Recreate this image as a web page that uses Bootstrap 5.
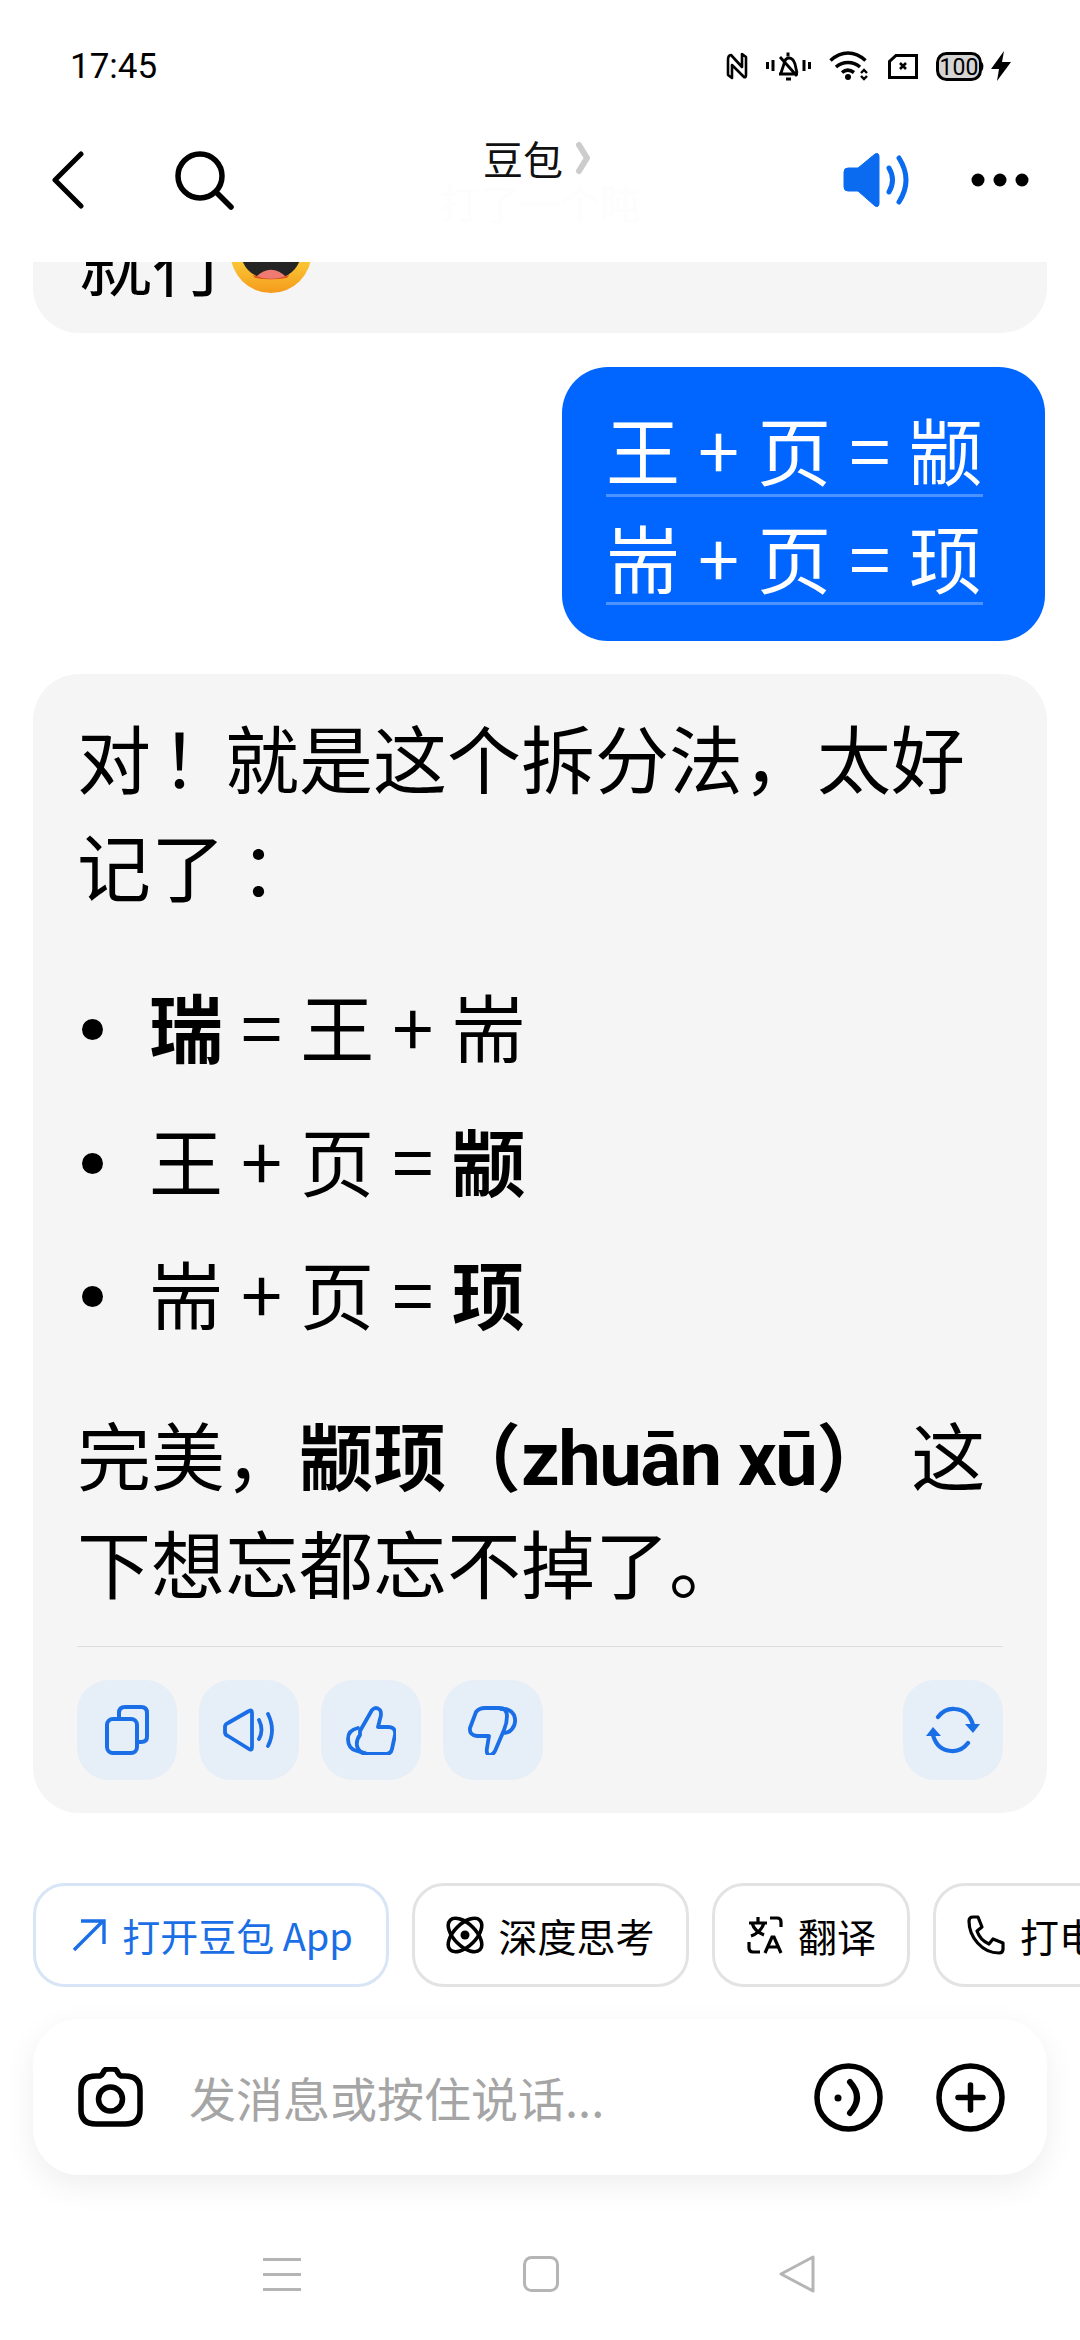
<!DOCTYPE html>
<html lang="zh">
<head>
<meta charset="UTF-8" />
<title>豆包</title>
<link href="https://cdn.jsdelivr.net/npm/bootstrap@5.3.0/dist/css/bootstrap.min.css" rel="stylesheet" />
<style>
body { width: 1080px; height: 2340px; overflow: hidden; background: #fff; color: #000; font-family: "Noto Sans CJK SC", "Noto Sans", sans-serif; }
svg { display: block; flex: none; }
.status-bar { height: 130px; padding: 2px 69px 0 70px; }
.clock { font: 400 35px/1 Roboto, sans-serif; }
.status-icons { gap: 18px; }
.batt-group { gap: 5px; }
.top-bar { height: 132px; padding: 0 51px 32px 51px; position: relative; }
.top-left { gap: 89px; }
.top-right { gap: 61px; }
.top-title { position: absolute; left: 483px; top: 6px; font-size: 40px; line-height: 44px; color: #111; }
.title-arrow { margin-left: 12px; }
.top-ghost { position: absolute; left: 440px; top: 50px; font-size: 40px; line-height: 44px; color: #fdfdfd; }
.bubble { font-size: 74px; line-height: 108px; word-spacing: 1.5px; }
.bubble-left { margin: 0 33px; background: #f5f5f5; border-radius: 46px; }
.bubble-cut { height: 71px; overflow: hidden; border-radius: 0 0 46px 46px; padding: 0 45px 22px; }
.bubble-cut span { line-height: 107px; }
.emoji-face { margin: 0 0 18px 4px; }
.bubble-user { width: 483px; height: 274px; margin: 34px 35px 33px auto; background: #0066ff; color: #fff; border-radius: 46px; padding: 22px 0 0 44px; line-height: 117px; }
.bubble-user div { width: 377px; height: 108px; white-space: nowrap; border-bottom: 3px solid #4d93ff; }
.bubble-main { height: 1139px; padding: 28px 45px 0 44px; }
.bubble-main p { margin: 0; }
.bang-mark { padding-left: 10px; margin-right: -10px; }
.colon-mark { padding-left: 15px; margin-right: -15px; }
.pinyin { font-family: Roboto, sans-serif; font-size: 76px; line-height: 1; letter-spacing: -1.5px; word-spacing: 0; }
.gap-after { margin-right: 3px; }
.dot-list { list-style: none; padding: 0; margin: 40px 0; }
.dot-list li { height: 133.5px; line-height: 133.5px; padding-left: 72px; position: relative; }
.dot-list li::before { content: ""; position: absolute; left: 5px; top: 61px; width: 21px; height: 21px; border-radius: 50%; background: #000; }
.bubble-main b { font-weight: 700; }
.msg-rule { height: 1px; background: #dedede; margin: 31px 0 33px 0; width: 926px; }
.act-row { margin-right: -1px; }
.act-group { gap: 22px; }
.act-btn { width: 100px; height: 100px; border-radius: 32px; background: #e6eef8; border: 0; padding: 0; }
.chips { margin: 70px 0 0 33px; gap: 23px; overflow: hidden; }
.chip { height: 104px; padding: 0; border: 3px solid #e3e3e3; border-radius: 32px; font-size: 39px; line-height: 1; background: #fff; white-space: nowrap; flex: none; gap: 14px; }
.chip-app { width: 356px; border-color: #d7e5f6; color: #1a6ee6; font-size: 38px; justify-content: center; gap: 16px; padding-left: 3px; }
.chip-think { width: 277px; justify-content: center; }
.chip-trans { width: 198px; justify-content: center; }
.chip-call { width: 200px; padding-left: 30px; }
.composer { height: 156px; margin: 32px 33px 0; border-radius: 46px; background: #fff; box-shadow: 0 10px 32px rgba(0,0,0,.07); padding: 0 42px 0 45px; }
.composer-hint { font-size: 47px; color: #a5a5a5; margin-left: 46px; }
.composer-tools { gap: 53px; }
.sys-nav { margin-top: 80px; padding-left: 263px; gap: 222px; }
.sys-back { margin-left: -2px; }
</style>
</head>
<body>

<div class="status-bar d-flex justify-content-between align-items-center">
  <div class="clock">17:45</div>
  <div class="status-icons d-flex align-items-center">
    <svg width="22" height="28" viewBox="0 0 22 28" fill="none" stroke="#000" stroke-width="2.600" stroke-linejoin="round"><path d="M2 8v15l4 3V13l12 12q2 1 2-2V5l-4-3v13L5 3Q2 3 2 8z"/></svg>
    <svg width="45" height="30" viewBox="0 0 45 30" fill="none" stroke="#000" stroke-width="2.800"><path d="M1.500 11v7M7 9v11M38 9v11M43.500 11v7" stroke-width="3"/><path d="M13 23h19M15 22l3-9q1-6 5-6t6 6l2 9M14 6l17 19"/><path d="M22 1.500v4M20 28h5" stroke-width="3"/></svg>
    <svg width="41" height="30" viewBox="0 0 41 30" fill="none" stroke="#000" stroke-width="3.600"><path d="M1.500 9.500c11-10 24-10 35 0M7 16c7-6 17-6 24 0M13 21.500c3.500-3 8-3 12 0"/><circle cx="19" cy="26" r="3" fill="#000" stroke="none"/><path d="M32 22l3-3 3 3M32 25l3 3 3-3" stroke-width="2.400"/></svg>
    <svg width="30" height="25" viewBox="0 0 30 25" fill="none" stroke="#000" stroke-width="3"><path d="M8 1.500h20.500v22h-27v-16z"/><path d="M12 9l6 6M18 9l-6 6" stroke-width="2.600"/></svg>
    <div class="batt-group d-flex align-items-center">
      <svg width="50" height="29" viewBox="0 0 50 29"><rect x="1.500" y="1.500" width="43" height="26" rx="9" fill="#d4d4d4" stroke="#000" stroke-width="3"/><path d="M46 10q3 4 0 9z" fill="#000"/><text x="23" y="23" text-anchor="middle" font-family="Roboto, sans-serif" font-size="23" fill="#000">100</text></svg>
      <svg width="20" height="30" viewBox="0 0 20 30"><path d="M13 0L0 18h8l-2 12L20 11h-9z" fill="#000"/></svg>
    </div>
  </div>
</div>

<div class="top-bar d-flex align-items-center justify-content-between">
  <div class="top-left d-flex align-items-center">
    <svg width="34" height="58" viewBox="0 0 34 58" fill="none" stroke="#000" stroke-width="5" stroke-linecap="round" stroke-linejoin="round"><path d="M30 3L4 29l26 26"/></svg>
    <svg width="60" height="60" viewBox="0 0 60 60" fill="none" stroke="#000" stroke-width="5.500" stroke-linecap="round"><circle cx="26" cy="26" r="22"/><path d="M42 42l15 15"/></svg>
  </div>
  <div class="top-title d-flex align-items-center">豆包<svg class="title-arrow" width="16" height="34" viewBox="0 0 16 34" fill="none" stroke="#ccc" stroke-width="6" stroke-linecap="round" stroke-linejoin="round"><path d="M4 4l8 13-8 13"/></svg></div>
  <div class="top-ghost">打了一个盹</div>
  <div class="top-right d-flex align-items-center">
    <svg width="67" height="56" viewBox="0 0 67 56" fill="none"><path d="M36 5q0-5-4-3L15 16H5q-4 0-4 4v15q0 4 4 4h10l17 15q4 2 4-3z" fill="#0a6bf0" stroke="#0a6bf0" stroke-width="1"/><path d="M46 16q7 12 0 24M56 6q14 22 0 44" stroke="#0a6bf0" stroke-width="5" stroke-linecap="round"/></svg>
    <svg width="58" height="14" viewBox="0 0 58 14" fill="#000"><circle cx="7" cy="7" r="6.500"/><circle cx="29" cy="7" r="6.500"/><circle cx="51" cy="7" r="6.500"/></svg>
  </div>
</div>

<div class="bubble bubble-left bubble-cut d-flex align-items-end">
  <span>就行</span>
  <svg class="emoji-face" width="82" height="81" viewBox="0 0 80 80"><defs><linearGradient id="emojiFill" x1="0" y1="0" x2="0" y2="1"><stop offset="0.5" stop-color="#fcd43e"/><stop offset="1" stop-color="#f59a1b"/></linearGradient></defs><circle cx="40" cy="40" r="40" fill="url(#emojiFill)"/><path d="M8 30h64Q70 66 40 66 10 66 8 30z" fill="#242424"/><path d="M24 65q16-16 32 0-16 3-32 0z" fill="#ee7a72"/><path d="M22 62q18 8 36 0l-2 3q-16 3-32 0z" fill="#d9551d"/></svg>
</div>

<div class="bubble bubble-user">
  <div>王 + 页 = 颛</div>
  <div>耑 + 页 = 顼</div>
</div>

<div class="bubble bubble-left bubble-main">
  <p>对<span class="bang-mark">！</span>就是这个拆分法，太好记了<span class="colon-mark">：</span></p>
  <ul class="dot-list">
    <li><b>瑞</b> = 王 + 耑</li>
    <li>王 + 页 = <b>颛</b></li>
    <li>耑 + 页 = <b>顼</b></li>
  </ul>
  <p>完美，<b class="gap-after">颛顼（<span class="pinyin">zhuān xū</span>）</b> 这下想忘都忘不掉了。</p>
  <div class="msg-rule"></div>
  <div class="act-row d-flex">
    <div class="act-group d-flex">
      <button class="act-btn d-flex align-items-center justify-content-center" type="button">
        <svg width="44" height="50" viewBox="0 0 44 50" fill="none" stroke="#1a6ee6" stroke-width="4" stroke-linejoin="round"><rect x="2" y="14" width="30" height="34" rx="6"/><path d="M14 14V8q0-6 6-6h16q6 0 6 6v24q0 5-6 5h-4"/></svg>
      </button>
      <button class="act-btn d-flex align-items-center justify-content-center" type="button">
        <svg width="52" height="44" viewBox="0 0 52 44" fill="none" stroke="#1a6ee6" stroke-width="3.800" stroke-linecap="round" stroke-linejoin="round"><path d="M26 3q3-2 3 2v34q0 4-3 2L5 28q-3-1-3-4v-5q0-3 3-4z"/><path d="M36 12q5 10 0 19M45 6q8 16 0 32"/></svg>
      </button>
      <button class="act-btn d-flex align-items-center justify-content-center" type="button">
        <svg width="50" height="50" viewBox="0 0 50 50" fill="none" stroke="#1a6ee6" stroke-width="3.800" stroke-linecap="round" stroke-linejoin="round"><path d="M14 26L26 5q4-4 8 0 2 3 0 9l-2 8h10q8 0 7 8l-3 14q-1 5-6 5H22q-9 0-11-8-1-6 3-11z"/><path d="M12 23Q2 25 2 34q0 10 9 12 4 1 8 2"/></svg>
      </button>
      <button class="act-btn d-flex align-items-center justify-content-center" type="button">
        <svg width="50" height="50" viewBox="0 0 50 50" fill="none" stroke="#1a6ee6" stroke-width="3.800" stroke-linecap="round" stroke-linejoin="round"><path d="M8 7q3-4 9-4h14q8 0 8 8 0 7-3 14l-9 21q-3 5-6 4-3-1-2-7l2-12H9q-8-1-7-8z"/><path d="M33 4q9-1 13 6 3 8-2 14-3 4-9 4"/></svg>
      </button>
    </div>
    <button class="act-btn d-flex align-items-center justify-content-center ms-auto" type="button">
      <svg width="56" height="48" viewBox="0 0 56 48" fill="none" stroke="#1a6ee6" stroke-width="4.200" stroke-linecap="round"><path d="M13 11q7-9 17-8 14 1 18 16"/><path d="M43 37q-7 9-17 8-14-1-18-16"/><path d="M40 18l8 9 7-9z" fill="#1a6ee6" stroke="none"/><path d="M1 30l7-9 8 9z" fill="#1a6ee6" stroke="none"/></svg>
    </button>
  </div>
</div>

<div class="chips d-flex">
  <div class="chip chip-app d-flex align-items-center">
    <svg width="34" height="34" viewBox="0 0 34 34" fill="none" stroke="#1a6ee6" stroke-width="3.400"><path d="M2 32L31 3M9 3h23v23"/></svg>
    <span>打开豆包 App</span>
  </div>
  <div class="chip chip-think d-flex align-items-center">
    <svg width="38" height="38" viewBox="0 0 38 38" fill="none" stroke="#000" stroke-width="3.600"><ellipse cx="19" cy="19" rx="21" ry="11" transform="rotate(45 19 19)"/><ellipse cx="19" cy="19" rx="21" ry="11" transform="rotate(-45 19 19)"/><circle cx="19" cy="19" r="4.500" fill="#000" stroke="none"/></svg>
    <span>深度思考</span>
  </div>
  <div class="chip chip-trans d-flex align-items-center">
    <svg width="38" height="40" viewBox="0 0 38 40" fill="none" stroke="#000" stroke-width="3.200"><path d="M3 8h18M12 2v6M6 8c2 7 7 10 12 12M18 8c-2 6-7 11-13 13"/><path d="M24 3h7q4 0 4 4v5M14 37H7q-4 0-4-4v-6"/><path d="M19 38l7-16h2l7 16M21.500 32h11"/></svg>
    <span>翻译</span>
  </div>
  <div class="chip chip-call d-flex align-items-center">
    <svg width="40" height="40" viewBox="0 0 40 40" fill="none" stroke="#000" stroke-width="3.200" stroke-linejoin="round"><path d="M3 6q0-4 4-4h5l4 10-5 4q3 9 12 13l4-5 10 4v6q0 4-4 4C16 38 3 22 3 6z"/></svg>
    <span>打电话</span>
  </div>
</div>

<div class="composer d-flex align-items-center">
  <svg width="65" height="60" viewBox="0 0 65 60" fill="none" stroke="#000" stroke-width="5.500" stroke-linejoin="round"><path d="M22 9q2-1 3-3l1-2q1-2 4-2h5q3 0 4 2l1 2q1 2 3 3h4q15 0 15 14v20q0 14-15 14H18Q3 57 3 43V23Q3 9 18 9z"/><circle cx="32.500" cy="32" r="12"/></svg>
  <div class="composer-hint flex-grow-1">发消息或按住说话...</div>
  <div class="composer-tools d-flex align-items-center">
    <svg width="69" height="69" viewBox="0 0 69 69" fill="none" stroke="#000" stroke-width="5.500" stroke-linecap="round"><circle cx="34.500" cy="34.500" r="31.500"/><circle cx="24" cy="35" r="3.500" fill="#000" stroke="none"/><path d="M36 19q14 15.500 0 31" stroke-width="6"/></svg>
    <svg width="69" height="69" viewBox="0 0 69 69" fill="none" stroke="#000" stroke-width="5.500" stroke-linecap="round"><circle cx="34.500" cy="34.500" r="31.500"/><path d="M34.500 22v25M22 34.500h25"/></svg>
  </div>
</div>

<div class="sys-nav d-flex align-items-center">
  <svg width="38" height="33" viewBox="0 0 38 33" fill="none" stroke="#b5b5b5" stroke-width="3"><path d="M0 1.500h38M0 16.500h38M0 31.500h38"/></svg>
  <svg width="36" height="36" viewBox="0 0 36 36" fill="none" stroke="#b5b5b5" stroke-width="3"><rect x="1.500" y="1.500" width="33" height="33" rx="7"/></svg>
  <svg class="sys-back" width="36" height="38" viewBox="0 0 36 38" fill="none" stroke="#b5b5b5" stroke-width="3" stroke-linejoin="round"><path d="M34 2v34L2 19z"/></svg>
</div>

<script src="https://cdn.jsdelivr.net/npm/bootstrap@5.3.0/dist/js/bootstrap.bundle.min.js"></script>
</body>
</html>
